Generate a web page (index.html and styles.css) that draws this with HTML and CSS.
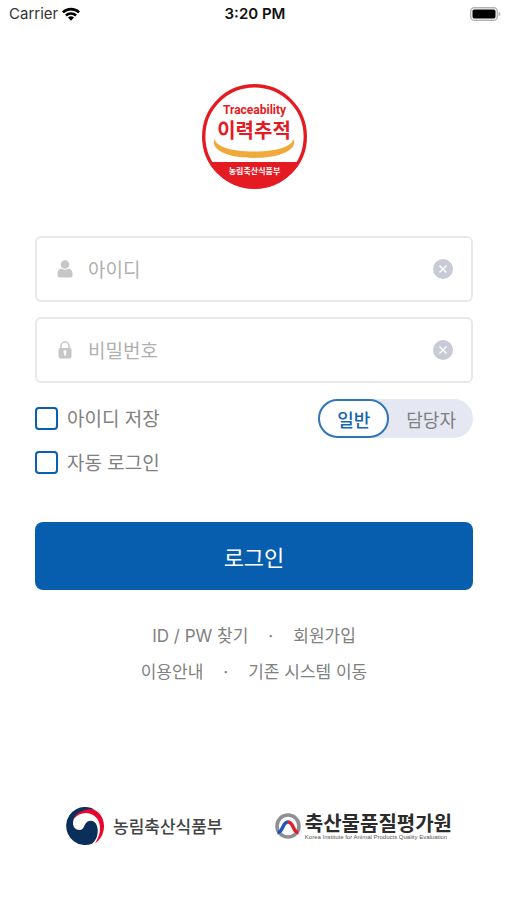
FILE: index.html
```html
<!DOCTYPE html>
<html lang="ko">
<head>
<meta charset="utf-8">
<meta name="viewport" content="width=device-width, initial-scale=1">
<title>이력추적 로그인</title>
<link rel="stylesheet" href="styles.css">
</head>
<body>
<header class="status">
  <span class="carrier">Carrier
    <svg width="18" height="14" viewBox="0 0 18 14" aria-hidden="true">
      <path d="M0 4.4A13 13 0 0 1 18 4.4L16.2 6.3A10.4 10.4 0 0 0 1.8 6.3Z"/>
      <path d="M3 7.5A8.8 8.8 0 0 1 15 7.5L13.2 9.4A6.1 6.1 0 0 0 4.8 9.4Z"/>
      <path d="M6 10.6A4.4 4.4 0 0 1 12 10.6L9 13.8Z"/>
    </svg>
  </span>
  <time class="time">3:20 PM</time>
  <svg class="battery" width="31" height="14" viewBox="0 0 31 14" aria-hidden="true">
    <rect x="0.7" y="0.7" width="26.6" height="12.6" rx="3.6" fill="#fff" stroke="#b4b4b4" stroke-width="1.4"/>
    <rect x="2.5" y="2.5" width="23" height="9" rx="1.8"/>
    <path d="M28.6 4.7Q30.6 5.4 30.6 7T28.6 9.3Z" fill="#b4b4b4"/>
  </svg>
</header>

<main class="page">
  <svg class="mark" width="105" height="105" viewBox="0 0 105 105" role="img" aria-label="Traceability 이력추적 농림축산식품부">
    <circle cx="52.5" cy="52.5" r="50.8" fill="#fff" stroke="#e51b24" stroke-width="3.4"/>
    <path d="M7 78H98A52.3 52.3 0 0 1 7 78Z" fill="#e51b24"/>
    <path d="M12.500 55C8 66 26 74 52 74S96 66 91.500 55C90 62 76 67.500 52 67.500S14 62 12.500 55Z" fill="#f2a93b"/>
    <text class="mark-en" x="52.500" y="30">Traceability</text>
    <text class="mark-ko" x="52" y="54">이력추적</text>
    <text class="mark-org" x="52.500" y="90">농림축산식품부</text>
  </svg>

  <form class="login">
    <div class="field">
      <svg width="16" height="18" viewBox="0 0 16 18" fill="#c6c6c6" aria-hidden="true">
        <circle cx="8" cy="4.500" r="4.300"/>
        <path d="M4 8.500Q8 11 12 8.500Q15.500 9.500 15.500 13.500V15.500Q15.500 17.500 13.500 17.500H2.500Q.5 17.500 .5 15.500V13.500Q.5 9.500 4 8.500Z"/>
      </svg>
      <input type="text" placeholder="아이디" aria-label="아이디">
      <button class="clear" type="button" aria-label="아이디 지우기">
        <svg width="20" height="20" viewBox="0 0 20 20"><circle cx="10" cy="10" r="10" fill="#c8cbd6"/><path d="M6.500 6.500L13.500 13.500M13.500 6.500L6.500 13.500" stroke="#fff" stroke-width="1.500"/></svg>
      </button>
    </div>
    <div class="field">
      <svg width="16" height="18" viewBox="0 0 16 18" aria-hidden="true">
        <path d="M4 8V5A4 4 0 0 1 12 5V8" fill="none" stroke="#c6c6c6" stroke-width="1.500"/>
        <rect x="1.500" y="7" width="13" height="10.500" rx="1.800" fill="#c6c6c6"/>
        <path d="M8 9.200A1.600 1.600 0 0 1 8.800 12.200V14.800H7.200V12.200A1.600 1.600 0 0 1 8 9.200Z" fill="#fff"/>
      </svg>
      <input type="password" placeholder="비밀번호" aria-label="비밀번호">
      <button class="clear" type="button" aria-label="비밀번호 지우기">
        <svg width="20" height="20" viewBox="0 0 20 20"><circle cx="10" cy="10" r="10" fill="#c8cbd6"/><path d="M6.500 6.500L13.500 13.500M13.500 6.500L6.500 13.500" stroke="#fff" stroke-width="1.500"/></svg>
      </button>
    </div>
    <div class="options">
      <div class="checks">
        <label class="check"><input type="checkbox">아이디 저장</label>
        <label class="check"><input type="checkbox">자동 로그인</label>
      </div>
      <div class="toggle">
        <button class="choice selected" type="button" aria-pressed="true">일반</button>
        <button class="choice" type="button" aria-pressed="false">담당자</button>
      </div>
    </div>
    <button class="submit" type="submit">로그인</button>
  </form>

  <nav class="links">
    <div class="row"><a href="#">ID / PW 찾기</a><span>·</span><a href="#">회원가입</a></div>
    <div class="row"><a href="#">이용안내</a><span>·</span><a href="#">기존 시스템 이동</a></div>
  </nav>

  <footer class="orgs">
    <div class="org">
      <svg width="39" height="38" viewBox="0 0 39 38" aria-hidden="true">
        <path d="M7.500 12C10 5 17 1.500 24 1.500C33 3 38 11 38 19C38 27 34 33 29 36.500C33 30 35 24 33.500 17C32 10 26 6 20 6C15 6 11 8 7.500 12Z" fill="#e4062f"/>
        <path d="M29 2.700A19 19 0 1 0 26 36.700C31 33 33 25 31 19C29 13 23 12.500 20 16C17.500 19.500 17.500 23 13.500 23C9.500 23 7 20 7 16C7 8 15 2.500 23 2.200C25.500 2 27.500 2.200 29 2.700Z" fill="#0b2f5b"/>
      </svg>
      <span class="ministry">농림축산식품부</span>
    </div>
    <div class="org institute">
      <svg width="26" height="26" viewBox="0 0 26 26" aria-hidden="true">
        <circle cx="13" cy="13" r="11" fill="#fff" stroke="#8e9094" stroke-width="3.600"/>
        <path d="M2.500 19.500C8.500 19.500 7 9 13 9" fill="none" stroke="#2456b8" stroke-width="3.400"/>
        <path d="M13 9C19 9 17.500 19.500 23.500 19.500" fill="none" stroke="#e0202c" stroke-width="3.400"/>
      </svg>
      <div class="names">
        <span class="name-ko">축산물품질평가원</span>
        <span class="name-en" lang="en">Korea Institute for Animal Products Quality Evaluation</span>
      </div>
    </div>
  </footer>
</main>
</body>
</html>
```

FILE: styles.css
```css
* {
  box-sizing: border-box;
}

body {
  margin: 0;
  background: #fff;
  color: #808080;
  font-family: "Noto Sans CJK KR", sans-serif;
}

button,
input {
  margin: 0;
  font-family: inherit;
}

svg {
  display: block;
  flex: none;
}

.status {
  display: grid;
  grid-template-columns: 1fr auto 1fr;
  align-items: center;
  height: 28px;
  padding: 0 6px 0 9px;
  color: #111;
  font: 15px/20px Inter, sans-serif;
}

.carrier {
  display: flex;
  align-items: center;
  gap: 4px;
  color: #333;
}

.carrier svg {
  fill: #000;
}

.time {
  font-weight: 600;
}

.battery {
  justify-self: end;
}

.page {
  display: flex;
  flex-direction: column;
  padding: 56px 34px 0 35px;
}

.mark {
  align-self: center;
}

.mark text {
  text-anchor: middle;
  fill: #e51b24;
}

.mark .mark-en {
  font: 700 12px Roboto, sans-serif;
}

.mark .mark-ko {
  font-size: 20px;
  font-weight: 700;
}

.mark .mark-org {
  fill: #fff;
  font-size: 8px;
  font-weight: 700;
}

.login {
  display: flex;
  flex-direction: column;
  gap: 15px;
  margin-top: 47px;
}

.field {
  display: flex;
  align-items: center;
  gap: 15px;
  height: 66px;
  padding: 0 18px 0 20px;
  border: 2px solid #e8e8e8;
  border-radius: 6px;
}

.field input {
  flex: 1;
  min-width: 0;
  padding: 0;
  border: 0;
  outline: 0;
  background: none;
  color: #555;
  font-size: 19px;
  line-height: 28px;
}

.field input::placeholder {
  color: #b0b0b0;
  opacity: 1;
}

.clear {
  padding: 0;
  border: 0;
  background: none;
}

.options {
  display: flex;
  align-items: flex-start;
  justify-content: space-between;
  margin-top: 1px;
}

.checks {
  display: flex;
  flex-direction: column;
  gap: 16px;
  padding-top: 5px;
}

.check {
  display: flex;
  align-items: center;
  gap: 9px;
  font-size: 19px;
  line-height: 28px;
}

.check input {
  appearance: none;
  width: 23px;
  height: 23px;
  margin: 0;
  border: 2px solid #0a5fb0;
  border-radius: 4px;
}

.toggle {
  display: flex;
  height: 39px;
  border-radius: 20px;
  background: #e5e7f2;
}

.choice {
  padding: 0 17px;
  border: 0;
  border-radius: 20px;
  background: none;
  color: #808080;
  font-size: 18px;
  line-height: 28px;
}

.selected {
  border: 2px solid #2e76b9;
  background: #fff;
  color: #1766b0;
  font-weight: 500;
}

.submit {
  height: 68px;
  margin-top: 31px;
  border: 0;
  border-radius: 8px;
  background: #085eae;
  color: #fff;
  font-size: 22px;
}

.links {
  display: flex;
  flex-direction: column;
  gap: 8px;
  margin-top: 32px;
}

.row {
  display: flex;
  justify-content: center;
  gap: 20px;
  font-family: Inter, "Noto Sans CJK KR", sans-serif;
  font-size: 17px;
  line-height: 28px;
}

.row a {
  color: inherit;
  text-decoration: none;
}

.orgs {
  display: flex;
  align-items: center;
  justify-content: space-between;
  margin-top: 121px;
  padding: 0 21px 0 31px;
}

.org {
  display: flex;
  align-items: center;
  gap: 8px;
}

.institute {
  gap: 4px;
}

.ministry {
  color: #444;
  font-size: 17px;
  font-weight: 500;
  line-height: 28px;
}

.names {
  display: flex;
  flex-direction: column;
}

.name-ko {
  color: #2b2b2b;
  font-size: 20px;
  font-weight: 700;
  line-height: 22px;
}

.name-en {
  color: #555;
  font: 6px/7px "Liberation Sans", sans-serif;
  white-space: nowrap;
}
```
